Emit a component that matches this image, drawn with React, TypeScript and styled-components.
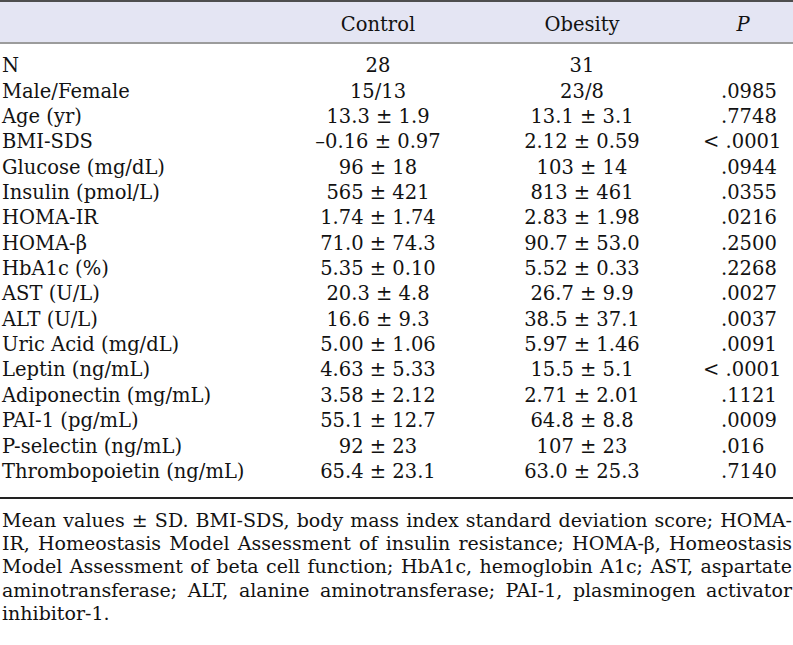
import React from "react";
import styled, { createGlobalStyle } from "styled-components";

const Global = createGlobalStyle`
  html, body { margin: 0; padding: 0; background: #fff; }
  body { font-family: "DejaVu Serif", "Liberation Serif", serif; color: #121212; }
`;

const Page = styled.div`
  width: 793px;
  font-size: 19.5px;
`;

const cols = "300px 156px 252px 70px 15px";

const HeaderRow = styled.div`
  display: grid;
  grid-template-columns: ${cols};
  background: #e4e5f3;
  border-top: 2px solid #4e4e4e;
  border-bottom: 2px solid #9c9c9c;
  padding: 9.5px 0 5.5px;
  line-height: 25.35px;
`;

const HeadCell = styled.div<{ $italic?: boolean }>`
  text-align: center;
  font-style: ${(p) => (p.$italic ? "italic" : "normal")};
`;

const Body = styled.div`
  padding: 9px 0 13px;
  border-bottom: 2px solid #222;
`;

const Row = styled.div`
  display: grid;
  grid-template-columns: ${cols};
  line-height: 25.35px;
  white-space: nowrap;
`;

const Label = styled.div`
  padding-left: 2px;
`;

const Value = styled.div`
  text-align: center;
`;

const PValue = styled.div`
  padding-left: 13px;
`;

const Lt = styled.span`
  margin-left: -18px;
`;

const Footnote = styled.div`
  padding: 9.5px 1px 0 2px;
  font-size: 19px;
  line-height: 23.3px;
`;

const Line = styled.span<{ $last?: boolean }>`
  display: block;
  text-align: ${(p) => (p.$last ? "left" : "justify")};
  text-align-last: ${(p) => (p.$last ? "left" : "justify")};
`;

type R = [string, string, string, string];

const rows: R[] = [
  ["N", "28", "31", ""],
  ["Male/Female", "15/13", "23/8", ".0985"],
  ["Age (yr)", "13.3 ± 1.9", "13.1 ± 3.1", ".7748"],
  ["BMI-SDS", "–0.16 ± 0.97", "2.12 ± 0.59", "< .0001"],
  ["Glucose (mg/dL)", "96 ± 18", "103 ± 14", ".0944"],
  ["Insulin (pmol/L)", "565 ± 421", "813 ± 461", ".0355"],
  ["HOMA-IR", "1.74 ± 1.74", "2.83 ± 1.98", ".0216"],
  ["HOMA-β", "71.0 ± 74.3", "90.7 ± 53.0", ".2500"],
  ["HbA1c (%)", "5.35 ± 0.10", "5.52 ± 0.33", ".2268"],
  ["AST (U/L)", "20.3 ± 4.8", "26.7 ± 9.9", ".0027"],
  ["ALT (U/L)", "16.6 ± 9.3", "38.5 ± 37.1", ".0037"],
  ["Uric Acid (mg/dL)", "5.00 ± 1.06", "5.97 ± 1.46", ".0091"],
  ["Leptin (ng/mL)", "4.63 ± 5.33", "15.5 ± 5.1", "< .0001"],
  ["Adiponectin (mg/mL)", "3.58 ± 2.12", "2.71 ± 2.01", ".1121"],
  ["PAI-1 (pg/mL)", "55.1 ± 12.7", "64.8 ± 8.8", ".0009"],
  ["P-selectin (ng/mL)", "92 ± 23", "107 ± 23", ".016"],
  ["Thrombopoietin (ng/mL)", "65.4 ± 23.1", "63.0 ± 25.3", ".7140"],
];

const notes = [
  "Mean values ± SD. BMI-SDS, body mass index standard deviation score; HOMA-",
  "IR, Homeostasis Model Assessment of insulin resistance; HOMA-β, Homeostasis",
  "Model Assessment of beta cell function; HbA1c, hemoglobin A1c; AST, aspartate",
  "aminotransferase; ALT, alanine aminotransferase; PAI-1, plasminogen activator",
  "inhibitor-1.",
];

function renderP(p: string) {
  if (p.startsWith("<")) {
    return (
      <>
        <Lt>&lt; </Lt>
        {p.slice(2)}
      </>
    );
  }
  return p;
}

export default function App() {
  return (
    <Page>
      <Global />
      <HeaderRow>
        <div />
        <HeadCell>Control</HeadCell>
        <HeadCell>Obesity</HeadCell>
        <HeadCell $italic>P</HeadCell>
        <div />
      </HeaderRow>
      <Body>
        {rows.map((r) => (
          <Row key={r[0]}>
            <Label>{r[0]}</Label>
            <Value>{r[1]}</Value>
            <Value>{r[2]}</Value>
            <PValue>{renderP(r[3])}</PValue>
            <div />
          </Row>
        ))}
      </Body>
      <Footnote>
        {notes.map((n, i) => (
          <Line key={i} $last={i === notes.length - 1}>
            {n}
          </Line>
        ))}
      </Footnote>
    </Page>
  );
}
